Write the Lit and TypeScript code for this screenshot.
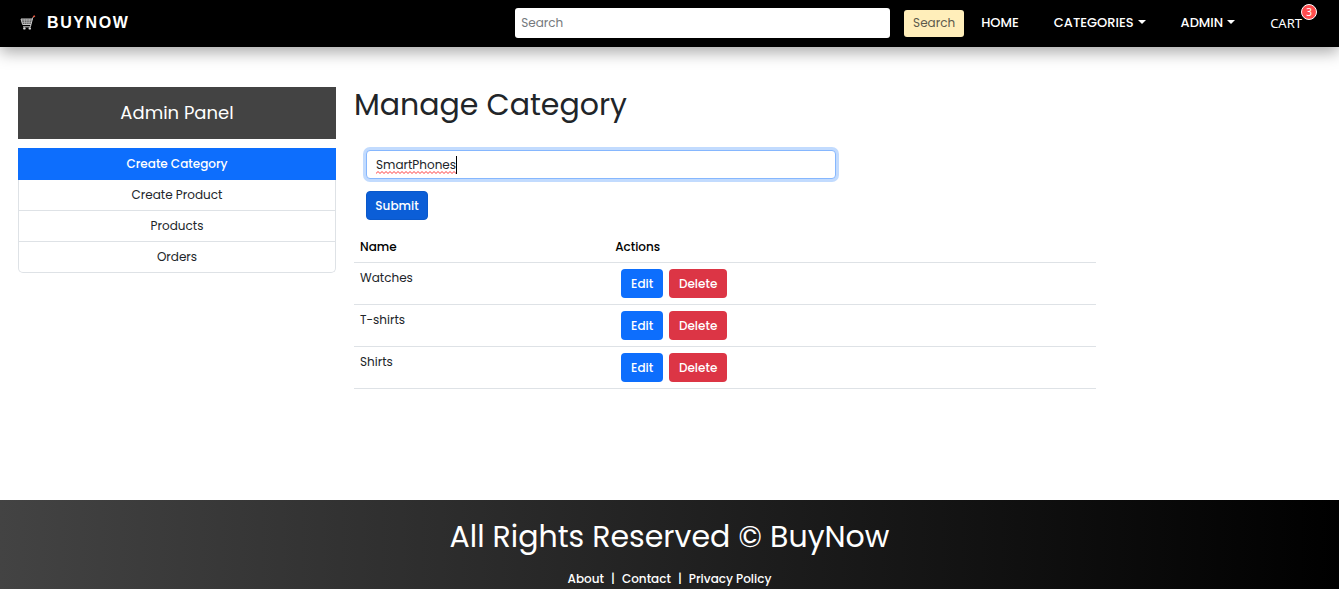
import { LitElement, html, css } from "lit";
import { customElement, state } from "lit/decorators.js";
import { styleMap } from "lit/directives/style-map.js";

@customElement("app-root")
export class AppRoot extends LitElement {
  @state() private categories = ["Watches", "T-shirts", "Shirts"];
  @state() private name = "SmartPhones";

  static styles = css`
    :host {
      display: flex;
      flex-direction: column;
      min-height: 100vh;
      overflow-x: clip;
      background: #fff;
      color: #212529;
      font-family: Poppins, Inter, "Open Sans", sans-serif;
      font-size: 12px;
      line-height: 18px;
    }
    * { box-sizing: border-box; }
    a { color: inherit; text-decoration: none; }
    button, input { font: inherit; margin: 0; }
    h1, h2, h4 { margin: 0; font-weight: 400; }

    .navbar {
      display: flex;
      align-items: center;
      padding: 8px 37px 9px 20px;
      background: #000;
      color: #fff;
      box-shadow: 0 5px 15px rgba(0, 0, 0, 0.35);
    }
    .brand {
      display: flex;
      align-items: center;
      gap: 11px;
      margin-right: auto;
      font-family: "Liberation Sans", Arial, sans-serif;
      font-size: 16px;
      font-weight: 700;
      letter-spacing: 0.1em;
    }
    .search { display: flex; align-items: center; gap: 14px; }
    .search input {
      width: 28vw;
      height: 30px;
      padding: 0 6px;
      border: 0;
      border-radius: 3px;
      background: #fff;
      color: #212529;
      outline: 0;
    }
    .search input::placeholder { color: #75797d; opacity: 1; }
    .search button {
      width: 60px;
      height: 27px;
      padding: 0;
      border: 0;
      border-radius: 3px;
      background: #ffeeba;
      color: #5d5a4c;
    }
    .links {
      display: flex;
      gap: 35px;
      margin: 0 0 0 17px;
      padding: 0;
      list-style: none;
      font-size: 13px;
      font-weight: 500;
    }
    .links a { display: flex; align-items: center; gap: 4px; }
    .caret {
      margin-bottom: 2px;
      border: 4px solid transparent;
      border-top-color: currentColor;
      border-bottom: 0;
    }
    .cart { position: relative; font-family: "Noto Sans", sans-serif; font-weight: 400; }
    .badge {
      position: absolute;
      left: 31px;
      top: -10px;
      width: 16px;
      height: 16px;
      border: 1px solid #fff;
      border-radius: 50%;
      background: #ff4d4f;
      font-size: 10px;
      line-height: 14px;
      text-align: center;
    }

    .content {
      display: grid;
      grid-template-columns: 318fr 985fr;
      gap: 18px;
      align-items: start;
      flex: 1;
      padding: 40px 0 40px 18px;
    }
    .panel-title {
      padding: 14px;
      margin-bottom: 9px;
      background: #434343;
      color: #fff;
      font-size: 18px;
      line-height: 24px;
      text-align: center;
    }
    .menu {
      display: flex;
      flex-direction: column;
      border: 1px solid #dee2e6;
      border-top: 0;
      border-radius: 0 0 5px 5px;
      text-align: center;
    }
    .menu a { padding: 6px 12px; border-top: 1px solid #dee2e6; }
    .menu .active {
      margin: 0 -1px;
      padding: 7px 12px;
      border: 0;
      background: #0d6efd;
      color: #fff;
      font-weight: 500;
    }
    .menu .active + a { border-top: 0; }

    h1 { font-size: 30px; line-height: 36px; }
    .form {
      width: 50.2%;
      padding: 12px;
      margin-top: 15px;
    }
    .field { display: grid; align-items: center; margin-bottom: 12px; }
    .field > * { grid-area: 1 / 1; }
    .field input {
      width: 100%;
      height: 29px;
      padding: 0 9px;
      border: 1px solid #86b7fe;
      border-radius: 4px;
      outline: 0;
      background: #fff;
      color: #212529;
      box-shadow: 0 0 0 3px #c2dbfe;
    }
    .cursor {
      z-index: 1;
      display: flex;
      align-items: flex-end;
      height: 18px;
      margin-left: 10px;
      border-right: 1px solid #000;
      pointer-events: none;
    }
    .cursor svg { display: block; width: 100%; height: 3px; }
    .btn {
      height: 29px;
      padding: 0 8px;
      border: 1px solid transparent;
      border-radius: 4px;
      background: #0d6efd;
      color: #fff;
      font-weight: 500;
    }
    .submit { background: #0b5ed7; border-color: #0a58ca; min-width: 62px; }
    .edit { min-width: 42px; }
    .delete { min-width: 58px; background: #dc3545; }

    table { width: 75.3%; border-collapse: collapse; }
    th, td {
      padding: 6px;
      border-bottom: 1px solid #dee2e6;
      text-align: left;
      vertical-align: top;
    }
    th { font-weight: 500; color: #000; }
    th:first-child { width: 34.4%; }
    .actions { display: flex; gap: 6px; padding-left: 6px; }

    .footer {
      padding: 19px 18px 1px;
      background: linear-gradient(to right, #434343, #000);
      color: #fff;
      text-align: center;
    }
    .footer h2 { font-size: 30px; line-height: 36px; }
    .footer nav {
      display: flex;
      justify-content: center;
      gap: 7px;
      margin-top: 15px;
      font-weight: 500;
    }
  `;

  render() {
    return html`
      <header class="navbar">
        <a class="brand" href="#">
          <svg width="16" height="16" viewBox="0 0 16 16" fill="none" aria-hidden="true">
            <path d="M1 4h11.4l-1.4 5.5H2.6z" fill="#555" stroke="#ccc" />
            <path d="M1.5 5.8h10.2M2 7.6h9.2M4.2 4l.6 5.5M6.8 4v5.5M9.4 4l-.5 5.5" stroke="#bbb" stroke-width=".7" />
            <path d="M11 9.5l-.6 2.3H3" stroke="#d0d0d0" />
            <path d="M12.2 4l1.2-2.2" stroke="#bbb" />
            <path d="M13 1.8l2-.7" stroke="#e2573f" stroke-width="1.6" />
            <circle cx="4.4" cy="13.4" r="1.2" fill="#ddd" />
            <circle cx="9.8" cy="13.4" r="1.2" fill="#ddd" />
          </svg>
          <span>BUYNOW</span>
        </a>
        <form class="search" @submit=${(e: Event) => e.preventDefault()}>
          <input type="search" placeholder="Search" aria-label="Search" />
          <button type="submit">Search</button>
        </form>
        <ul class="links">
          <li><a href="#">HOME</a></li>
          <li><a href="#">CATEGORIES<i class="caret"></i></a></li>
          <li><a href="#">ADMIN<i class="caret"></i></a></li>
          <li><a class="cart" href="#">CART<span class="badge">3</span></a></li>
        </ul>
      </header>

      <main class="content">
        <aside>
          <h4 class="panel-title">Admin Panel</h4>
          <nav class="menu">
            <a class="active" href="#">Create Category</a>
            <a href="#">Create Product</a>
            <a href="#">Products</a>
            <a href="#">Orders</a>
          </nav>
        </aside>
        <section>
          <h1 id="title">Manage Category</h1>
          <form class="form" @submit=${this.add}>
            <div class="field">
              <input
                type="text"
                aria-labelledby="title"
                .value=${this.name}
                @input=${(e: Event) => (this.name = (e.target as HTMLInputElement).value)}
              />
              <div class="cursor" aria-hidden="true" style=${styleMap({ width: `${this.measure(this.name)}px` })}>
                <svg>
                  <pattern id="wave" width="4" height="3" patternUnits="userSpaceOnUse">
                    <path d="M-1 1.5L0 2.5L2 .5L4 2.5L5 1.5" fill="none" stroke="#f22" stroke-width=".9" />
                  </pattern>
                  <rect width="100%" height="3" fill="url(#wave)" />
                </svg>
              </div>
            </div>
            <button class="btn submit" type="submit">Submit</button>
          </form>
          <table>
            <thead>
              <tr><th scope="col">Name</th><th scope="col">Actions</th></tr>
            </thead>
            <tbody>
              ${this.categories.map(
                (c) => html`<tr>
                  <td>${c}</td>
                  <td>
                    <div class="actions">
                      <button class="btn edit" type="button">Edit</button>
                      <button class="btn delete" type="button" @click=${() => this.remove(c)}>Delete</button>
                    </div>
                  </td>
                </tr>`
              )}
            </tbody>
          </table>
        </section>
      </main>

      <footer class="footer">
        <h2>All Rights Reserved © BuyNow</h2>
        <nav>
          <a href="#">About</a><span>|</span><a href="#">Contact</a><span>|</span><a href="#">Privacy Policy</a>
        </nav>
      </footer>
    `;
  }

  // Width of the typed text plus the caret, so the spelling mark ends with the last letter.
  private measure(text: string): number {
    const ctx = document.createElement("canvas").getContext("2d");
    if (!ctx) return 0;
    ctx.font = '12px Poppins, Inter, "Open Sans", sans-serif';
    return Math.round(ctx.measureText(text).width) + 1;
  }

  private add(e: Event) {
    e.preventDefault();
    if (!this.name) return;
    this.categories = [...this.categories, this.name];
    this.name = "";
  }

  private remove(category: string) {
    this.categories = this.categories.filter((c) => c !== category);
  }
}
